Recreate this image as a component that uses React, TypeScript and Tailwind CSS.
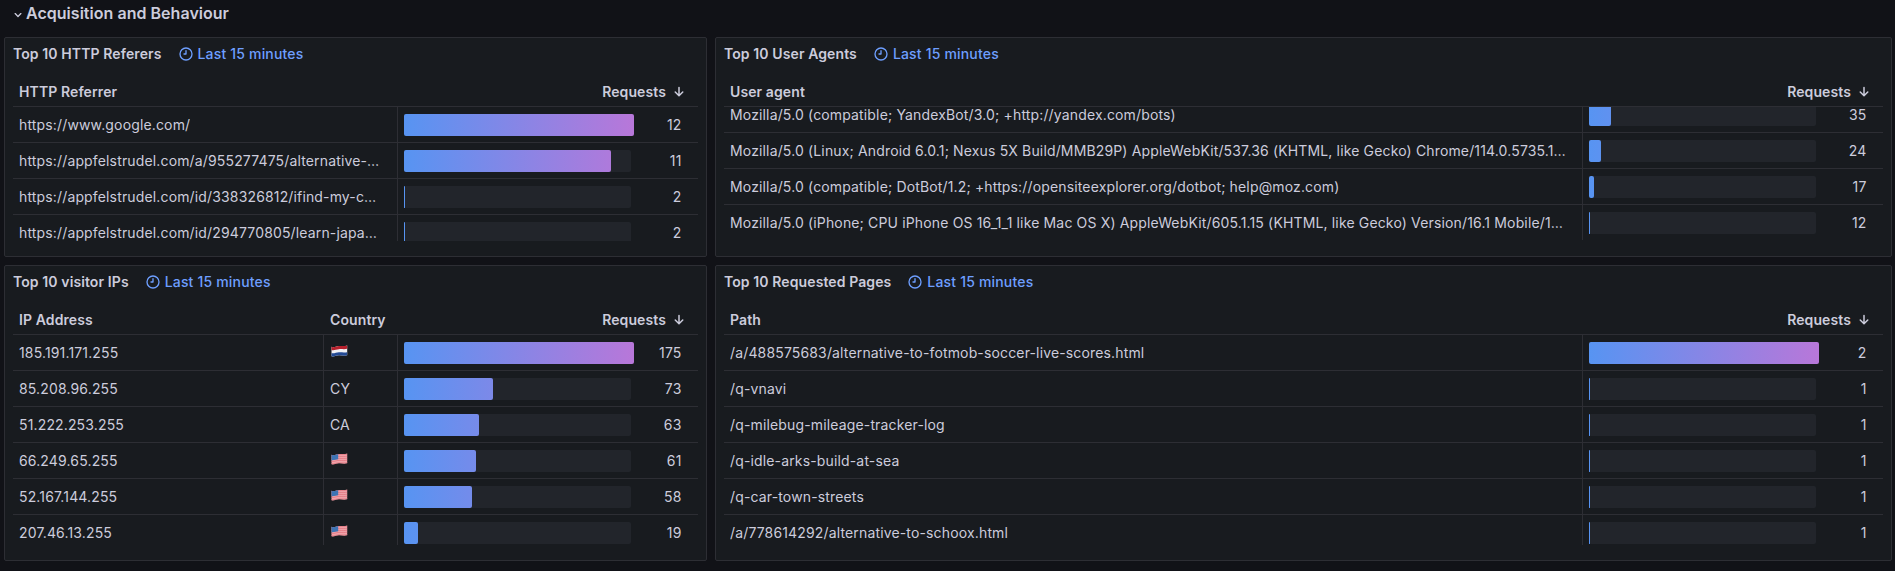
import type { ReactNode } from "react";

type Row = { cells: ReactNode[]; value: number; bar: number };

type PanelProps = {
  title: string;
  columns: string[];
  template: string;
  rows: Row[];
  scrolled?: boolean;
};

function ClockIcon() {
  return (
    <svg className="size-4 shrink-0" viewBox="0 0 24 24" fill="currentColor">
      <path d="M12,2A10,10,0,1,0,22,12,10.01114,10.01114,0,0,0,12,2Zm0,18a8,8,0,1,1,8-8A8.00917,8.00917,0,0,1,12,20ZM12,6a.99974.99974,0,0,0-1,1v4H9a1,1,0,0,0,0,2h3a.99974.99974,0,0,0,1-1V7A.99974.99974,0,0,0,12,6Z" />
    </svg>
  );
}

function ArrowDownIcon() {
  return (
    <svg className="size-[18px] shrink-0" viewBox="0 0 24 24" fill="currentColor">
      <path d="M17.71,11.29a1,1,0,0,0-1.42,0L13,14.59V6a1,1,0,0,0-2,0v8.59l-3.29-3.3a1,1,0,0,0-1.42,1.42l5,5a1,1,0,0,0,.33.21.94.94,0,0,0,.76,0,1,1,0,0,0,.33-.21l5-5A1,1,0,0,0,17.71,11.29Z" />
    </svg>
  );
}

function AngleDownIcon() {
  return (
    <svg className="mt-1 size-4 shrink-0" viewBox="0 0 24 24" fill="currentColor">
      <path d="M17,9.17a1,1,0,0,0-1.41,0L12,12.71,8.46,9.17a1,1,0,0,0-1.41,0,1,1,0,0,0,0,1.42l4.24,4.24a1,1,0,0,0,1.42,0L17,10.59A1,1,0,0,0,17,9.17Z" />
    </svg>
  );
}

const WAVE = "M0.5 1.8C3 3 5 0.9 8 0.9S13 1.6 16.2 0.5V10.3C13 11.4 11 10.2 8 10.3S3 12 0.5 11.2Z";

function FlagNL() {
  return (
    <svg className="mb-1 ml-px block h-3 w-[17px]" viewBox="0 0 17 12" role="img" aria-label="NL">
      <clipPath id="nl">
        <path d={WAVE} />
      </clipPath>
      <g clipPath="url(#nl)">
        <rect width="17" height="12" fill="#f1f1f4" />
        <path d="M0 0H17V3.6C13 4.9 11 3.8 8 4.2S3 5.6 0 4.9Z" fill="#b5202c" />
        <path d="M0 8.1C3 8.9 5 7.5 8 7.3S13 8 17 6.9V12H0Z" fill="#234a94" />
      </g>
    </svg>
  );
}

function FlagUS() {
  return (
    <svg className="mb-1 ml-px block h-3 w-[17px]" viewBox="0 0 17 12" role="img" aria-label="US">
      <clipPath id="us">
        <path d={WAVE} />
      </clipPath>
      <g clipPath="url(#us)">
        <rect width="17" height="12" fill="#efa3a9" />
        <g fill="none" stroke="#e37681" strokeWidth="0.8">
          <path d="M0 2.2C3 3.2 5 1.4 8 1.4S13 2 17 1" />
          <path d="M0 4.2C3 5.2 5 3.4 8 3.4S13 4 17 3" />
          <path d="M0 6.2C3 7.2 5 5.4 8 5.4S13 6 17 5" />
          <path d="M0 8.2C3 9.2 5 7.4 8 7.4S13 8 17 7" />
          <path d="M0 10.6C3 11.6 5 9.8 8 9.8S13 10.4 17 9.4" />
        </g>
        <path d="M0 0H7.2V6.3C5 6.4 3 7.7 0 7.2Z" fill="#3d74b4" />
      </g>
    </svg>
  );
}

function Panel({ title, columns, template, rows, scrolled }: PanelProps) {
  return (
    <section className="flex min-h-0 min-w-0 flex-col rounded-[2px] border border-[#2d2e34] bg-[#181b1f] px-2 pb-[15px]">
      <header className="flex h-8 shrink-0 items-center">
        <h2 className="font-semibold tracking-[0.1px]">{title}</h2>
        <div className="ml-4 flex items-center gap-1 font-medium tracking-[0.18px] text-[#6e9fff]">
          <ClockIcon />
          <span>Last 15 minutes</span>
        </div>
      </header>
      <div className={`mt-px grid h-9 shrink-0 border-b border-[#2d2e34] pt-1.5 font-semibold tracking-[0.1px] ${template}`}>
        {columns.map((c) => (
          <div key={c} className="flex items-center pl-1.5">
            {c}
          </div>
        ))}
        <div className="flex items-center justify-end gap-1 pr-2.5">
          <span>Requests</span>
          <ArrowDownIcon />
        </div>
      </div>
      <div className="min-h-0 flex-1 overflow-hidden">
        <div className={scrolled ? "-mt-2.5" : ""}>
          {rows.map((r, i) => (
            <div
              key={i}
              className={`grid h-9 border-b border-[#2d2e34] last:h-[35px] last:border-b-0 ${template}`}
            >
              {r.cells.map((c, j) => (
                <div key={j} className="flex min-w-0 items-center border-r border-[#2d2e34] px-1.5">
                  {typeof c === "string" ? <span className="truncate">{c}</span> : c}
                </div>
              ))}
              <div className="flex items-center justify-between pr-[16.5px] pl-1.5">
                <div className="h-[22px] w-[227px] rounded-[2px] bg-[#22252b]">
                  <div
                    className="h-full rounded-[2px] bg-[linear-gradient(90deg,#5794f2,#b877d9)] bg-[length:230px_100%] bg-no-repeat"
                    style={{ width: r.bar }}
                  />
                </div>
                <span>{r.value}</span>
              </div>
            </div>
          ))}
        </div>
      </div>
    </section>
  );
}

const referers: Row[] = [
  { cells: ["https://www.google.com/"], value: 12, bar: 230 },
  { cells: ["https://appfelstrudel.com/a/955277475/alternative-…"], value: 11, bar: 207 },
  { cells: ["https://appfelstrudel.com/id/338326812/ifind-my-c…"], value: 2, bar: 1 },
  { cells: ["https://appfelstrudel.com/id/294770805/learn-japa…"], value: 2, bar: 1 },
];

const agents: Row[] = [
  { cells: ["Mozilla/5.0 (compatible; YandexBot/3.0; +http://yandex.com/bots)"], value: 35, bar: 22 },
  {
    cells: [
      "Mozilla/5.0 (Linux; Android 6.0.1; Nexus 5X Build/MMB29P) AppleWebKit/537.36 (KHTML, like Gecko) Chrome/114.0.5735.1…",
    ],
    value: 24,
    bar: 12,
  },
  {
    cells: ["Mozilla/5.0 (compatible; DotBot/1.2; +https://opensiteexplorer.org/dotbot; help@moz.com)"],
    value: 17,
    bar: 5,
  },
  {
    cells: [
      "Mozilla/5.0 (iPhone; CPU iPhone OS 16_1_1 like Mac OS X) AppleWebKit/605.1.15 (KHTML, like Gecko) Version/16.1 Mobile/1…",
    ],
    value: 12,
    bar: 1,
  },
];

const visitors: Row[] = [
  { cells: ["185.191.171.255", <FlagNL />], value: 175, bar: 230 },
  { cells: ["85.208.96.255", "CY"], value: 73, bar: 89 },
  { cells: ["51.222.253.255", "CA"], value: 63, bar: 75 },
  { cells: ["66.249.65.255", <FlagUS />], value: 61, bar: 72 },
  { cells: ["52.167.144.255", <FlagUS />], value: 58, bar: 68 },
  { cells: ["207.46.13.255", <FlagUS />], value: 19, bar: 14 },
];

const pages: Row[] = [
  { cells: ["/a/488575683/alternative-to-fotmob-soccer-live-scores.html"], value: 2, bar: 230 },
  { cells: ["/q-vnavi"], value: 1, bar: 1 },
  { cells: ["/q-milebug-mileage-tracker-log"], value: 1, bar: 1 },
  { cells: ["/q-idle-arks-build-at-sea"], value: 1, bar: 1 },
  { cells: ["/q-car-town-streets"], value: 1, bar: 1 },
  { cells: ["/a/778614292/alternative-to-schoox.html"], value: 1, bar: 1 },
];

const TWO_COLUMNS = "grid-cols-[minmax(0,1fr)_300px]";
const THREE_COLUMNS = "grid-cols-[minmax(0,1fr)_74px_300px]";

export default function App() {
  return (
    <main className="h-[571px] overflow-hidden bg-[#111217] font-['Inter',sans-serif] text-sm leading-[22px] tracking-[0.15px] text-[#ccccdc]">
      <div className="flex h-[37px] items-start pt-px pl-2.5">
        <div className="flex items-center">
          <AngleDownIcon />
          <h1 className="text-base leading-6 font-semibold tracking-[0.03px]">Acquisition and Behaviour</h1>
        </div>
      </div>
      <div className="grid grid-cols-[703px_1177px] grid-rows-[220px_296px] gap-2 pl-1">
        <Panel title="Top 10 HTTP Referers" columns={["HTTP Referrer"]} template={TWO_COLUMNS} rows={referers} />
        <Panel title="Top 10 User Agents" columns={["User agent"]} template={TWO_COLUMNS} rows={agents} scrolled />
        <Panel title="Top 10 visitor IPs" columns={["IP Address", "Country"]} template={THREE_COLUMNS} rows={visitors} />
        <Panel title="Top 10 Requested Pages" columns={["Path"]} template={TWO_COLUMNS} rows={pages} />
      </div>
    </main>
  );
}
